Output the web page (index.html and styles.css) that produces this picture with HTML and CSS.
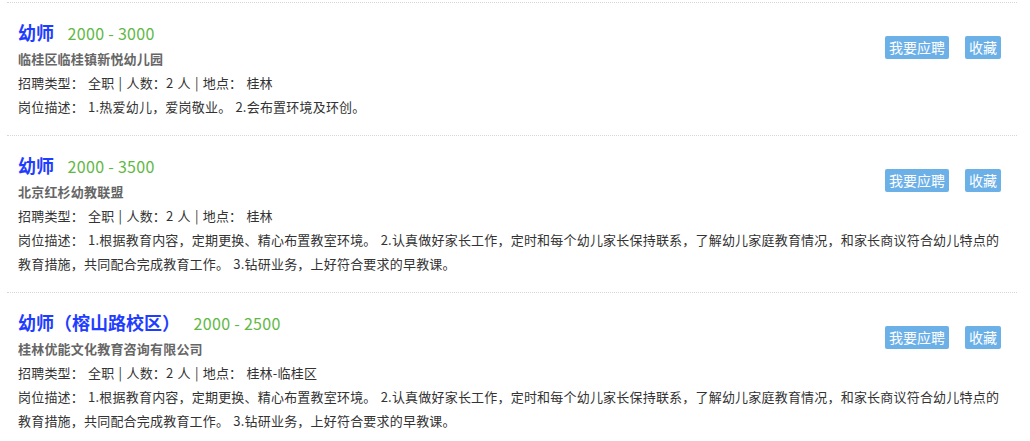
FILE: index.html
```
<!DOCTYPE html>
<html lang="zh-CN">
<head>
    <meta charset="UTF-8">
    <meta name="viewport" content="width=device-width, initial-scale=1.0">
    <title>招聘信息</title>
    <link rel="stylesheet" href="styles.css">
</head>
<body>
    <div class="job-list">
        <div class="job-item">
            <div class="job-actions">
                <button class="job-btn">我要应聘</button>
                <button class="job-btn">收藏</button>
            </div>
            <div class="job-title">
                <a href="#">幼师</a>
                <span class="job-salary">2000 - 3000</span>
            </div>
            <div class="job-company">临桂区临桂镇新悦幼儿园</div>
            <div class="job-meta">招聘类型： 全职 | 人数：2 人 | 地点： 桂林</div>
            <div class="job-desc">岗位描述： 1.热爱幼儿，爱岗敬业。 2.会布置环境及环创。</div>
        </div>
        <div class="job-item">
            <div class="job-actions">
                <button class="job-btn">我要应聘</button>
                <button class="job-btn">收藏</button>
            </div>
            <div class="job-title">
                <a href="#">幼师</a>
                <span class="job-salary">2000 - 3500</span>
            </div>
            <div class="job-company">北京红杉幼教联盟</div>
            <div class="job-meta">招聘类型： 全职 | 人数：2 人 | 地点： 桂林</div>
            <div class="job-desc">岗位描述： 1.根据教育内容，定期更换、精心布置教室环境。 2.认真做好家长工作，定时和每个幼儿家长保持联系，了解幼儿家庭教育情况，和家长商议符合幼儿特点的教育措施，共同配合完成教育工作。 3.钻研业务，上好符合要求的早教课。</div>
        </div>
        <div class="job-item">
            <div class="job-actions">
                <button class="job-btn">我要应聘</button>
                <button class="job-btn">收藏</button>
            </div>
            <div class="job-title">
                <a href="#">幼师（榕山路校区）</a>
                <span class="job-salary">2000 - 2500</span>
            </div>
            <div class="job-company">桂林优能文化教育咨询有限公司</div>
            <div class="job-meta">招聘类型： 全职 | 人数：2 人 | 地点： 桂林-临桂区</div>
            <div class="job-desc">岗位描述： 1.根据教育内容，定期更换、精心布置教室环境。 2.认真做好家长工作，定时和每个幼儿家长保持联系，了解幼儿家庭教育情况，和家长商议符合幼儿特点的教育措施，共同配合完成教育工作。 3.钻研业务，上好符合要求的早教课。</div>
        </div>
    </div>
</body>
</html>
```
FILE: styles.css
```
body {
    font-family: "Noto Sans CJK SC", "Noto Sans", sans-serif;
    background-color: #fff;
    color: #333;
    margin: 0;
    padding: 2px 13px 0 7px;
}

.job-item {
    border-top: 1px dotted #d6d6d6;
    padding: 15px 16px 16px 11px;
}

.job-actions {
    float: right;
    display: flex;
    gap: 16px;
    margin-top: 18px;
}

.job-btn {
    height: 23px;
    padding: 0 4px;
    border: none;
    border-radius: 2px;
    background-color: #6cb0e8;
    color: #fff;
    font-family: inherit;
    font-size: 14px;
    line-height: 23px;
    cursor: pointer;
}

.job-title {
    line-height: 28px;
}

.job-title a {
    color: #1f3dff;
    font-size: 18px;
    font-weight: bold;
    text-decoration: none;
    margin-right: 10px;
}

.job-salary {
    color: #62b846;
    font-size: 16px;
    letter-spacing: 0.3px;
}

.job-company {
    color: #666;
    font-size: 13px;
    font-weight: bold;
    line-height: 24px;
    letter-spacing: 0.2px;
}

.job-meta,
.job-desc {
    font-size: 13px;
    line-height: 24px;
    letter-spacing: 0.2px;
    word-spacing: 1px;
}
```
